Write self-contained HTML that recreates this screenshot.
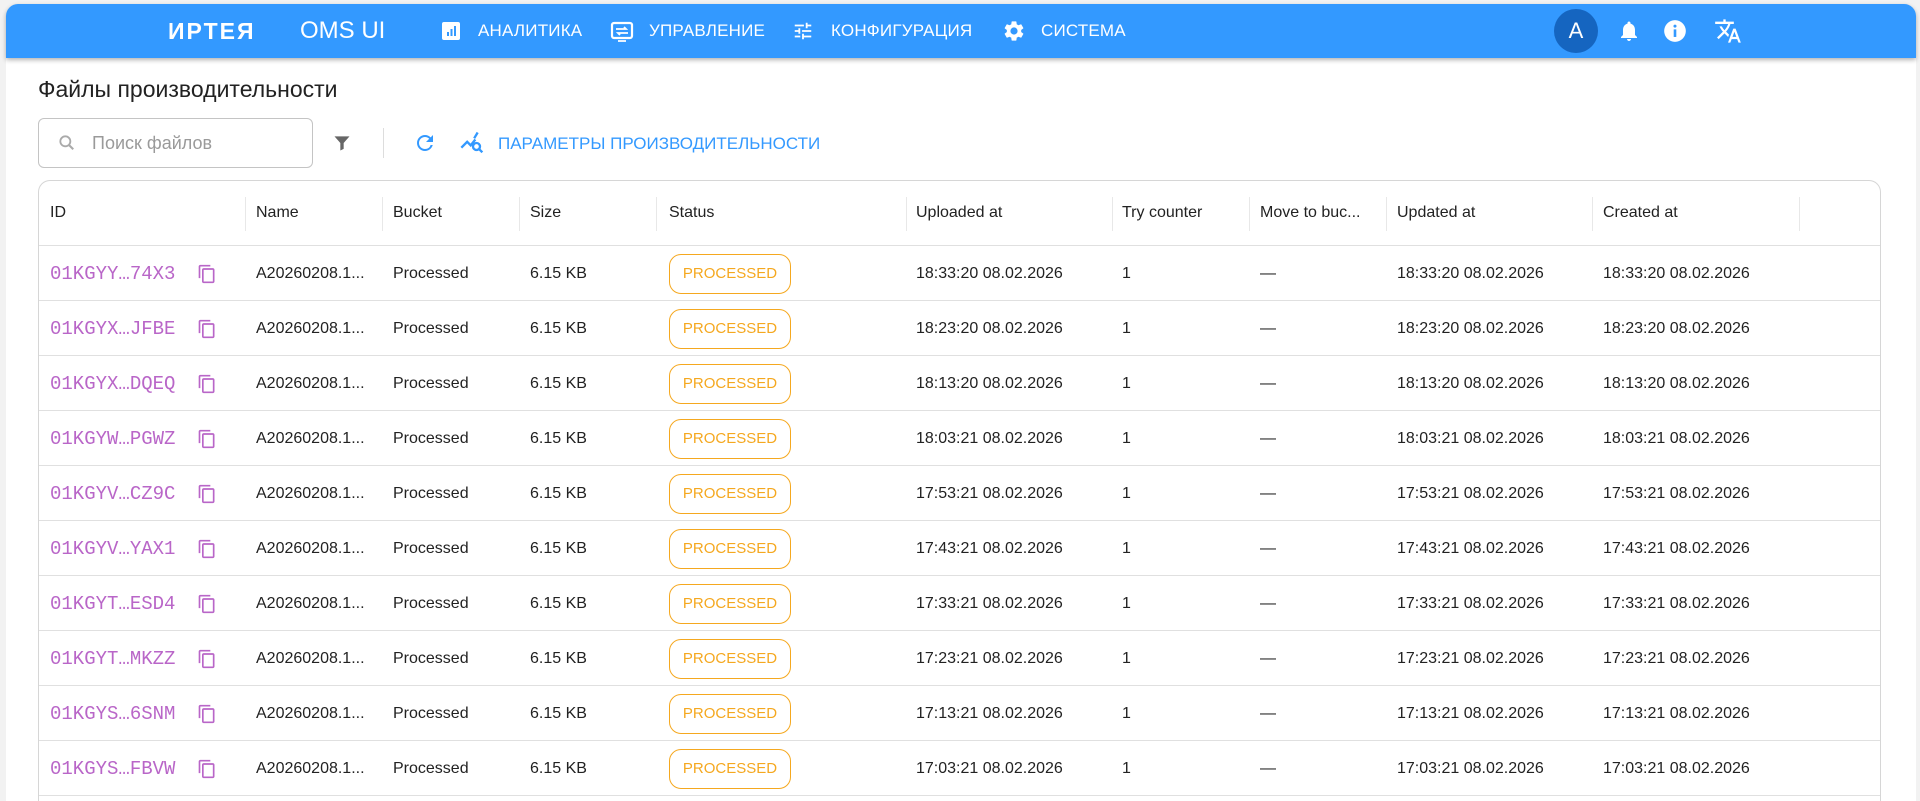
<!DOCTYPE html>
<html><head><meta charset="utf-8"><style>
*{box-sizing:border-box;margin:0;padding:0}
html,body{width:1920px;height:801px;overflow:hidden}
body{background:#f2f2f2;font-family:"Liberation Sans",sans-serif;color:#222;position:relative}
.page{position:absolute;left:6px;top:4px;width:1910px;height:797px;background:#fff;border-radius:12px 12px 0 0}
.hdr{position:absolute;left:6px;top:4px;width:1910px;height:54px;background:#3399ff;border-radius:12px 12px 0 0;box-shadow:0 2px 5px rgba(0,0,0,.3);color:#fff}
.abs{position:absolute}
.nav{position:absolute;top:17px;font-size:17px;letter-spacing:.2px;white-space:nowrap}
.t{position:absolute;font-size:16px;white-space:nowrap}
.tbl{position:absolute;left:38px;top:180px;width:1843px;height:621px;border:1px solid #d6d6d6;border-bottom:none;border-radius:12px 12px 0 0;overflow:hidden}
.hl{position:absolute;left:0;width:1841px;height:1px;background:#e0e0e0}
.vd{position:absolute;top:16px;width:1px;height:34px;background:#e8e8e8}
.chip{position:absolute;left:630px;width:122px;height:40px;border:1.5px solid #f5a81f;border-radius:12px;color:#f5a81f;font-size:15px;text-align:center;line-height:37px}
.id{position:absolute;left:11px;font-family:"Liberation Mono",monospace;font-size:19px;color:#b966c8}
</style></head><body>
<div class="page"></div>
<div class="hdr">
 <div class="abs" style="left:162px;top:14px;font-size:23px;font-weight:bold;letter-spacing:2px">ИРТЕЯ</div>
 <div class="abs" style="left:294px;top:13px;font-size:24px">OMS UI</div>
 <svg class="abs" style="left:435px;top:17px" width="20" height="20" viewBox="0 0 20 20"><rect x="1" y="1" width="18" height="18" rx="2" fill="#fff"/><rect x="6" y="11" width="2" height="4" fill="#3399ff"/><rect x="9.5" y="8" width="2" height="7" fill="#3399ff"/><rect x="13" y="5" width="2" height="10" fill="#3399ff"/></svg>
 <div class="nav" style="left:472px">АНАЛИТИКА</div>
 <svg class="abs" style="left:604px;top:16px" width="24" height="24" viewBox="0 0 24 24"><rect x="2" y="3" width="20" height="15" rx="2" fill="none" stroke="#fff" stroke-width="2.2"/><path d="M8 21h8M6 9h10l-2-2M18 13H8l2 2" stroke="#fff" stroke-width="1.8" fill="none"/></svg>
 <div class="nav" style="left:643px">УПРАВЛЕНИЕ</div>
 <svg class="abs" style="left:786px;top:16px" width="22" height="22" viewBox="0 0 24 24"><path d="M3 17v2h6v-2H3zM3 5v2h10V5H3zm10 16v-2h8v-2h-8v-2h-2v6h2zM7 9v2H3v2h4v2h2V9H7zm14 4v-2H11v2h10zm-6-4h2V7h4V5h-4V3h-2v6z" fill="#fff"/></svg>
 <div class="nav" style="left:825px">КОНФИГУРАЦИЯ</div>
 <svg class="abs" style="left:996px;top:15px" width="24" height="24" viewBox="0 0 24 24"><path fill="#fff" d="M19.14 12.94c.04-.3.06-.61.06-.94 0-.32-.02-.64-.07-.94l2.03-1.58a.49.49 0 00.12-.61l-1.920-3.32a.488.488 0 00-.59-.22l-2.39.96c-.5-.38-1.03-.7-1.62-.94l-.36-2.54a.484.484 0 00-.48-.41h-3.84c-.24 0-.43.17-.47.41l-.36 2.54c-.59.24-1.13.57-1.62.94l-2.39-.96c-.22-.08-.47 0-.59.22L2.74 8.87c-.12.21-.08.47.12.61l2.03 1.58c-.05.3-.09.63-.09.94s.02.64.07.94l-2.03 1.58a.49.49 0 00-.12.61l1.92 3.32c.12.22.37.29.59.22l2.39-.96c.5.38 1.030.7 1.62.94l.36 2.54c.05.24.24.41.48.41h3.84c.24 0 .44-.17.47-.41l.36-2.54c.59-.24 1.13-.56 1.62-.94l2.39.96c.22.08.47 0 .59-.22l1.92-3.32c.12-.22.07-.47-.12-.61l-2.01-1.58zM12 15.6A3.6 3.6 0 1112 8.4a3.6 3.6 0 010 7.2z"/></svg>
 <div class="nav" style="left:1035px">СИСТЕМА</div>
 <div class="abs" style="left:1548px;top:5px;width:44px;height:44px;border-radius:50%;background:#1565c0;text-align:center;line-height:44px;font-size:22px">A</div>
 <svg class="abs" style="left:1611px;top:15px" width="24" height="24" viewBox="0 0 24 24"><path fill="#fff" d="M12 22c1.1 0 2-.9 2-2h-4c0 1.1.9 2 2 2zm6-6v-5c0-3.07-1.630-5.64-4.5-6.32V4c0-.83-.67-1.5-1.5-1.5s-1.5.67-1.5 1.5v.68C7.64 5.36 6 7.920 6 11v5l-2 2v1h16v-1l-2-2z"/></svg>
 <svg class="abs" style="left:1656px;top:14px" width="26" height="26" viewBox="0 0 24 24"><circle cx="12" cy="12" r="10" fill="#fff"/><rect x="10.8" y="10.5" width="2.4" height="7" fill="#3399ff"/><circle cx="12" cy="7.5" r="1.4" fill="#3399ff"/></svg>
 <svg class="abs" style="left:1708px;top:13px" width="28" height="28" viewBox="0 0 24 24"><path fill="#fff" d="M12.87 15.07l-2.54-2.51.03-.03A17.52 17.52 0 0014.07 6H17V4h-7V2H8v2H1v1.99h11.17C11.5 7.92 10.44 9.75 9 11.35 8.07 10.32 7.3 9.19 6.69 8h-2c.73 1.63 1.73 3.17 2.98 4.56l-5.09 5.02L4 19l5-5 3.11 3.11.76-2.04zM18.5 10h-2L12 22h2l1.12-3h4.75L21 22h2l-4.5-12zm-2.62 7l1.62-4.33L19.12 17h-3.24z"/></svg>
</div>

<div class="abs" style="left:38px;top:76px;font-size:23px;color:#222">Файлы производительности</div>
<div class="abs" style="left:38px;top:118px;width:275px;height:50px;border:1px solid #c4c4c4;border-radius:6px"></div>
<svg class="abs" style="left:57px;top:133px" width="20" height="20" viewBox="0 0 24 24"><circle cx="10" cy="10" r="6" stroke="#aaa" stroke-width="2.2" fill="none"/><path d="M14.5 14.5l5 5" stroke="#aaa" stroke-width="2.5"/></svg>
<div class="abs" style="left:92px;top:133px;font-size:18px;color:#9a9a9a">Поиск файлов</div>
<svg class="abs" style="left:332px;top:133px" width="20" height="20" viewBox="0 0 24 24"><path d="M3 4h18l-7 8v7l-4 2v-9z" fill="#666"/></svg>
<div class="abs" style="left:383px;top:128px;width:1px;height:30px;background:#ddd"></div>
<svg class="abs" style="left:413px;top:131px" width="24" height="24" viewBox="0 0 24 24"><path fill="#3399ff" d="M17.65 6.35A7.958 7.958 0 0012 4c-4.42 0-7.99 3.58-7.99 8s3.57 8 7.990 8c3.73 0 6.84-2.55 7.73-6h-2.08A5.99 5.99 0 0112 18c-3.31 0-6-2.69-6-6s2.69-6 6-6c1.66 0 3.14.69 4.22 1.78L13 11h7V4l-2.35 2.35z"/></svg>
<svg class="abs" style="left:459px;top:129px" width="28" height="28" viewBox="0 0 24 24"><path d="M2 16l5-5 3 3 4-5M16 3l-3 5" stroke="#3399ff" stroke-width="2" fill="none"/><circle cx="15" cy="15" r="3" stroke="#3399ff" stroke-width="2" fill="none"/><path d="M17 17l3 3" stroke="#3399ff" stroke-width="2"/></svg>
<div class="abs" style="left:498px;top:134px;font-size:17px;color:#3399ff">ПАРАМЕТРЫ ПРОИЗВОДИТЕЛЬНОСТИ</div>

<div class="tbl">
 <div class="t" style="left:11px;top:23px">ID</div>
 <div class="t" style="left:217px;top:23px">Name</div>
 <div class="t" style="left:354px;top:23px">Bucket</div>
 <div class="t" style="left:491px;top:23px">Size</div>
 <div class="t" style="left:630px;top:23px">Status</div>
 <div class="t" style="left:877px;top:23px">Uploaded at</div>
 <div class="t" style="left:1083px;top:23px">Try counter</div>
 <div class="t" style="left:1221px;top:23px">Move to buc...</div>
 <div class="t" style="left:1358px;top:23px">Updated at</div>
 <div class="t" style="left:1564px;top:23px">Created at</div>
 <div class="vd" style="left:206px"></div><div class="vd" style="left:343px"></div><div class="vd" style="left:480px"></div><div class="vd" style="left:617px"></div><div class="vd" style="left:867px"></div><div class="vd" style="left:1073px"></div><div class="vd" style="left:1210px"></div><div class="vd" style="left:1347px"></div><div class="vd" style="left:1553px"></div><div class="vd" style="left:1760px"></div>
 <div id="rows"></div>
</div>
<script>
var d=[["01KGYY…74X3","18:33:20"],["01KGYX…JFBE","18:23:20"],["01KGYX…DQEQ","18:13:20"],["01KGYW…PGWZ","18:03:21"],["01KGYV…CZ9C","17:53:21"],["01KGYV…YAX1","17:43:21"],["01KGYT…ESD4","17:33:21"],["01KGYT…MKZZ","17:23:21"],["01KGYS…6SNM","17:13:21"],["01KGYS…FBVW","17:03:21"],["01KGYR…2K9P","16:53:21"]];
var h="";
d.forEach(function(r,i){var y=65+i*55;var ty=y+19;var dt=r[1]+" 08.02.2026";
h+='<div class="hl" style="top:'+(y-1)+'px"></div>';
h+='<div class="id" style="top:'+(ty-2)+'px">'+r[0]+'</div>';
h+='<svg style="position:absolute;left:158px;top:'+(ty-2)+'px" width="20" height="22" viewBox="0 0 24 24"><path fill="#b966c8" d="M16 1H4c-1.1 0-2 .9-2 2v14h2V3h12V1zm3 4H8c-1.1 0-2 .9-2 2v14c0 1.1.9 2 2 2h11c1.1 0 2-.9 2-2V7c0-1.1-.9-2-2-2zm0 16H8V7h11v14z"/></svg>';
h+='<div class="t" style="left:217px;top:'+ty+'px">A20260208.1...</div>';
h+='<div class="t" style="left:354px;top:'+ty+'px">Processed</div>';
h+='<div class="t" style="left:491px;top:'+ty+'px">6.15 KB</div>';
h+='<div class="chip" style="top:'+(y+8)+'px">PROCESSED</div>';
h+='<div class="t" style="left:877px;top:'+ty+'px">'+dt+'</div>';
h+='<div class="t" style="left:1083px;top:'+ty+'px">1</div>';
h+='<div class="t" style="left:1221px;top:'+ty+'px">—</div>';
h+='<div class="t" style="left:1358px;top:'+ty+'px">'+dt+'</div>';
h+='<div class="t" style="left:1564px;top:'+ty+'px">'+dt+'</div>';});
document.getElementById("rows").innerHTML=h;
</script>
</body></html>
